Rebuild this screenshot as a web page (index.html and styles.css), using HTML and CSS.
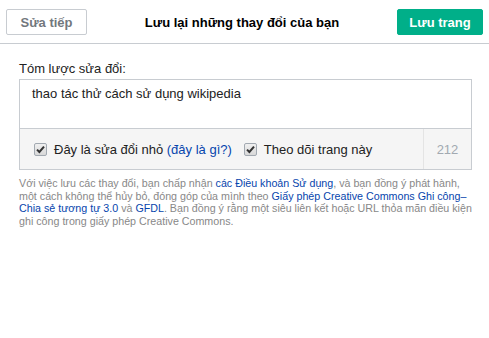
FILE: index.html
```html
<!DOCTYPE html>
<html lang="vi">
<head>
    <meta charset="UTF-8">
    <meta name="viewport" content="width=device-width, initial-scale=1.0">
    <title>Lưu trang</title>
    <link rel="stylesheet" href="styles.css">
</head>
<body>

<div class="save-header">
    <button class="btn btn-back">Sửa tiếp</button>
    <div class="save-title">Lưu lại những thay đổi của bạn</div>
    <button class="btn btn-save">Lưu trang</button>
</div>

<div class="save-content">
    <div class="summary-label">Tóm lược sửa đổi:</div>
    <div class="summary-box">
        <div class="summary-text">thao tác thử cách sử dụng wikipedia</div>
        <div class="summary-footer">
            <div class="summary-options">
                <label class="option">
                    <span class="check"><svg width="9" height="9" viewBox="0 0 9 9"><path d="M1 4.6 L3.4 7 L8 1.6" fill="none" stroke="#333" stroke-width="2"/></svg></span>
                    <span>Đây là sửa đổi nhỏ <a href="#">(đây là gì?)</a></span>
                </label>
                <label class="option">
                    <span class="check"><svg width="9" height="9" viewBox="0 0 9 9"><path d="M1 4.6 L3.4 7 L8 1.6" fill="none" stroke="#333" stroke-width="2"/></svg></span>
                    <span>Theo dõi trang này</span>
                </label>
            </div>
            <div class="summary-count">212</div>
        </div>
    </div>
    <p class="license">Với việc lưu các thay đổi, bạn chấp nhận <a href="#">các Điều khoản Sử dụng</a>, và bạn đồng ý phát hành,<br>một cách không thể hủy bỏ, đóng góp của mình theo <a href="#">Giấy phép Creative Commons Ghi công–<br>Chia sẻ tương tự 3.0</a> và <a href="#">GFDL</a>. Bạn đồng ý rằng một siêu liên kết hoặc URL thỏa mãn điều kiện<br>ghi công trong giấy phép Creative Commons.</p>
</div>

</body>
</html>
```

FILE: styles.css
```css
body {
    font-family: "Liberation Sans", Arial, sans-serif;
    margin: 0;
    background: #fff;
    color: #222;
}

.save-header {
    display: flex;
    align-items: center;
    justify-content: space-between;
    padding: 9px 6px 8px 6px;
    border-bottom: 1px solid #c8ccd1;
}

.btn {
    font-family: inherit;
    font-size: 13px;
    font-weight: bold;
    height: 26px;
    border-radius: 2px;
    padding: 0;
    cursor: pointer;
}

.btn-back {
    width: 81px;
    background: #fff;
    border: 1px solid #c8ccd1;
    color: #72777d;
}

.btn-save {
    width: 86px;
    background: #00af89;
    border: 1px solid #00af89;
    color: #fff;
}

.save-title {
    font-size: 13px;
    font-weight: bold;
    color: #000;
}

.save-content {
    padding: 17px 17px 0 19px;
}

.summary-label {
    font-size: 13px;
    line-height: 16px;
    margin-bottom: 2px;
}

.summary-box {
    border: 1px solid #c8ccd1;
}

.summary-text {
    font-size: 13px;
    line-height: 16px;
    height: 36px;
    padding: 6px 12px 6px 12px;
    color: #222;
}

.summary-footer {
    display: flex;
    height: 40px;
    background: #f5f5f5;
    border-top: 1px solid #c8ccd1;
}

.summary-options {
    flex: 1;
    display: flex;
    align-items: center;
    gap: 12px;
    padding-left: 14px;
    font-size: 13px;
}

.option {
    display: flex;
    align-items: center;
    gap: 7px;
    color: #222;
}

.option a {
    color: #0645ad;
    text-decoration: none;
}

.check {
    width: 11px;
    height: 11px;
    border: 1px solid #a2a9b1;
    border-radius: 2px;
    background: linear-gradient(#f0f0f0, #d8d8d8);
    display: flex;
    align-items: center;
    justify-content: center;
}

.summary-count {
    width: 47px;
    border-left: 1px solid #e4e4e4;
    display: flex;
    align-items: center;
    justify-content: center;
    font-size: 13px;
    color: #a2a9b1;
}

.license {
    margin: 7px 0 0 0;
    font-size: 10.7px;
    line-height: 12.7px;
    color: #888;
}

.license a {
    color: #0645ad;
    text-decoration: none;
}
```
